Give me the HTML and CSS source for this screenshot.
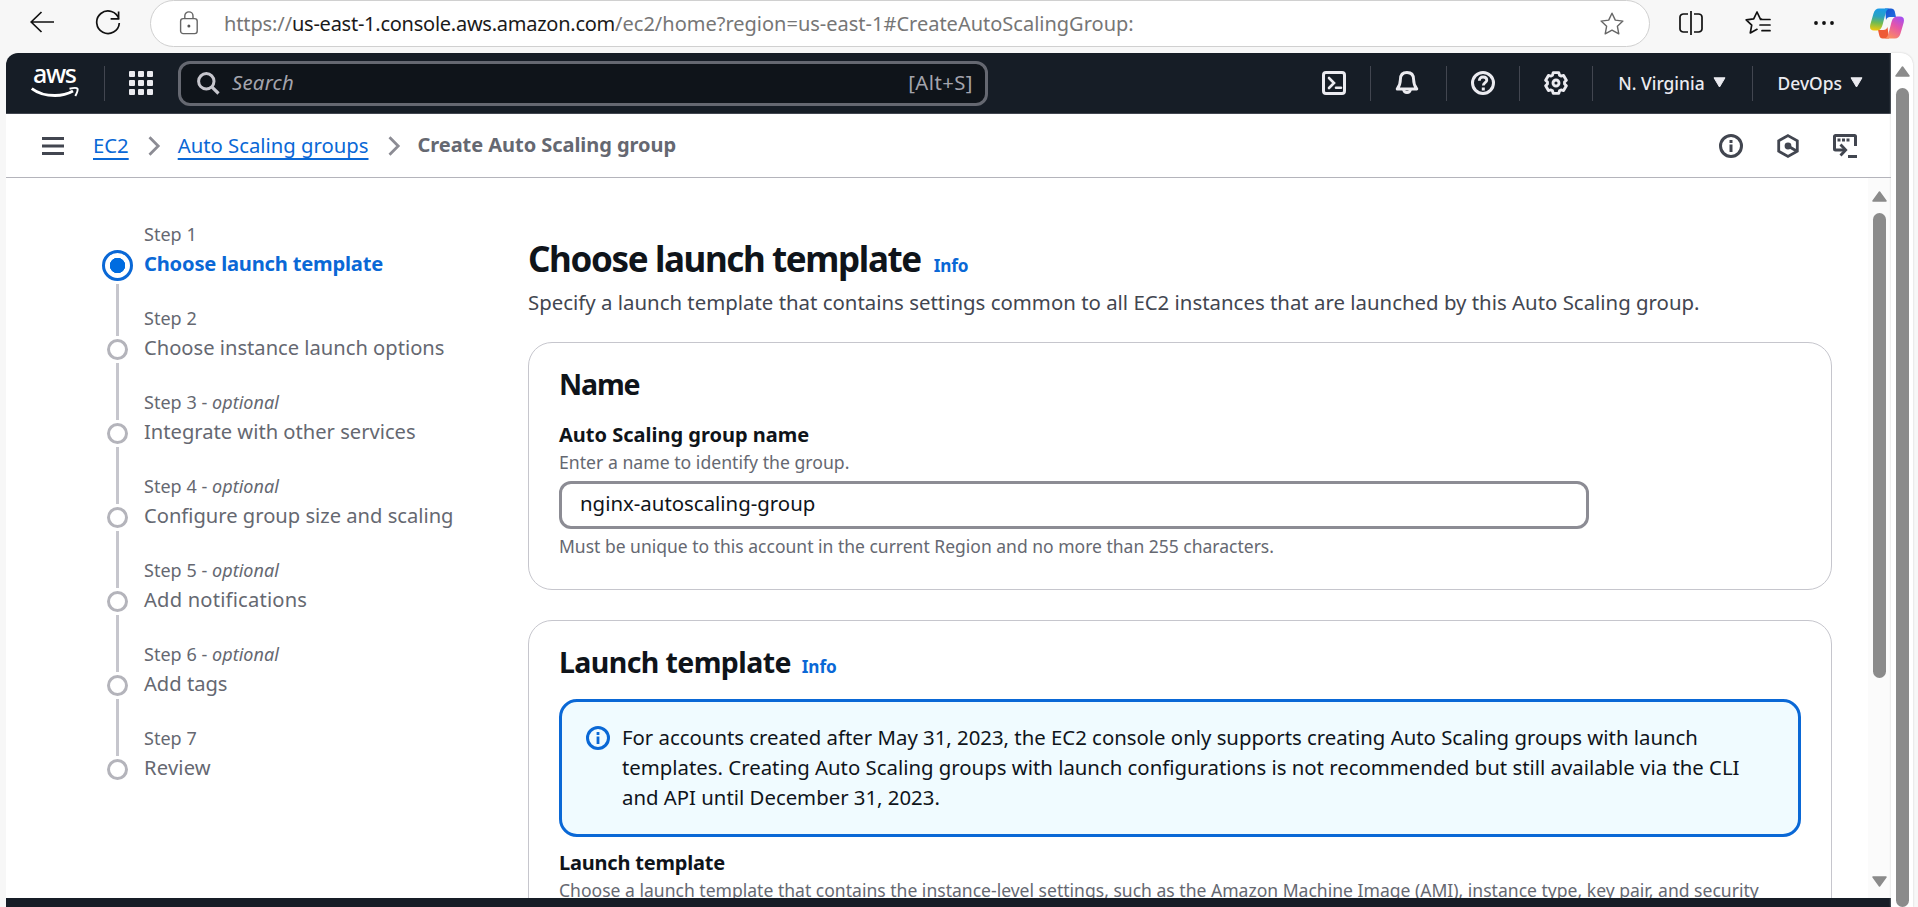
FILE: index.html
```html
<!DOCTYPE html>
<html lang="en">
<head>
<meta charset="utf-8">
<title>Create Auto Scaling group</title>
<link rel="stylesheet" href="styles.css">
</head>
<body>
<div class="browser-bar">
  <svg class="b-back" width="24" height="22" viewBox="0 0 24 22"><path d="M11.5 1 1.2 11l10.3 10M1.2 11H24" fill="none" stroke="#111" stroke-width="1.7"/></svg>
  <svg class="b-reload" width="26" height="26" viewBox="0 0 26 26"><path d="M23.9 9.2A11.3 11.3 0 1 0 24.3 13M23.6 1.5v7.3h-8" fill="none" stroke="#111" stroke-width="1.7"/></svg>
  <div class="address">
    <svg class="b-lock" width="20" height="24" viewBox="0 0 20 24"><rect x="1.6" y="7.6" width="16.6" height="15" rx="2.6" fill="none" stroke="#666" stroke-width="1.4"/><path d="M5.8 7.6V5a4.1 4.1 0 0 1 8.2 0v2.6" fill="none" stroke="#666" stroke-width="1.4"/><circle cx="9.9" cy="15" r="1.5" fill="#555"/></svg>
    <div class="url"><span class="u1">https://</span><span class="u2">us-east-1.console.aws.amazon.com</span><span class="u3">/ec2/home?region=us-east-1#CreateAutoScalingGroup:</span></div>
    <svg class="b-star" width="26" height="26" viewBox="0 0 26 26"><path d="M13 2.2l3.3 6.9 7.6 1-5.5 5.2 1.4 7.5L13 19.2l-6.8 3.6 1.4-7.5L2.1 10.1l7.6-1z" fill="none" stroke="#666" stroke-width="1.4" stroke-linejoin="round"/></svg>
  </div>
  <svg class="b-split" width="24" height="24" viewBox="0 0 24 24"><path d="M9 3H4.500A3.500 3 0 0 0 1 6v12a3.500 3 0 0 0 3.500 3H9M15 3h4.500A3.500 3 0 0 1 23 6v12a3.500 3 0 0 1-3.500 3H15M12 0v24" fill="none" stroke="#111" stroke-width="1.7"/></svg>
  <svg class="b-fav" width="26" height="24" viewBox="0 0 26 24"><path d="M16.500 8l-1.200-.2L12 1 8.700 7.800l-7.500 1 5.500 5.300-1.400 7.800L12 18.300M15.500 8.500H25M15 14h10M17 19.700h8" fill="none" stroke="#111" stroke-width="1.700" stroke-linejoin="round" stroke-linecap="round"/></svg>
  <svg class="b-dots" width="22" height="6" viewBox="0 0 22 6"><g fill="#111"><circle cx="3" cy="3" r="1.900"/><circle cx="11" cy="3" r="1.900"/><circle cx="19" cy="3" r="1.900"/></g></svg>
  <svg class="b-copilot" width="34" height="31" viewBox="0 0 34 31">
    <defs>
      <linearGradient id="ca" x1=".4" y1="0" x2=".3" y2="1"><stop offset="0" stop-color="#1a9be8"/><stop offset=".35" stop-color="#2aa3c0"/><stop offset=".65" stop-color="#72bb50"/><stop offset="1" stop-color="#f2c80c"/></linearGradient>
      <linearGradient id="cb" x1=".8" y1="0" x2=".3" y2="1"><stop offset="0" stop-color="#a64ef0"/><stop offset=".45" stop-color="#e556a8"/><stop offset="1" stop-color="#fb8d60"/></linearGradient>
      <linearGradient id="cc" x1="0" y1="0" x2="1" y2="1"><stop offset="0" stop-color="#1550d0"/><stop offset="1" stop-color="#2273e2"/></linearGradient>
    </defs>
    <path d="M15 .5h6q3 0 3.800 3L26 9h-6q-3 0-4 3z" fill="url(#cc)"/>
    <path d="M19 30.500h-6.500q-2.500 0-3.200-3L8 22h5.500q3 0 4-3z" fill="#ee5a35"/>
    <path d="M9 .5h10q-2.500 1-3.500 5l-3 11.500q-1.500 5.500-5.500 5.500H4q-5 0-3.700-6L3.500 5.500Q5 .5 9 .5z" fill="url(#ca)"/>
    <path d="M25 30.500H15q2.500-1 3.500-5l3-11.500q1.500-5.500 5.500-5.500h3q5 0 3.700 6l-3.200 11q-1.500 5-5.500 5z" fill="url(#cb)"/>
  </svg>
</div>

<div class="viewport">
  <div class="page">
    <header class="topnav">
      <svg class="logo" width="50" height="38" viewBox="0 0 50 38"><text class="logo-text" x="2" y="22" textLength="44">aws</text><path d="M.8 27.500Q10 34.500 24 34.500q10 0 18-4.500" fill="none" stroke="#fff" stroke-width="2.800"/><path d="M38.500 27.800q7-1.800 8 0 .8 1.700-2.200 7.200" fill="none" stroke="#fff" stroke-width="2"/></svg>
      <i class="divider d-logo"></i>
      <svg class="apps" width="24" height="24" viewBox="0 0 24 24"><g fill="#ebebf0"><rect width="6" height="6" rx="1"/><rect x="9" width="6" height="6" rx="1"/><rect x="18" width="6" height="6" rx="1"/><rect y="9" width="6" height="6" rx="1"/><rect x="9" y="9" width="6" height="6" rx="1"/><rect x="18" y="9" width="6" height="6" rx="1"/><rect y="18" width="6" height="6" rx="1"/><rect x="9" y="18" width="6" height="6" rx="1"/><rect x="18" y="18" width="6" height="6" rx="1"/></g></svg>
      <div class="search">
        <svg width="23" height="23" viewBox="0 0 23 23"><circle cx="9.300" cy="9.300" r="7.700" fill="none" stroke="#c6c6cd" stroke-width="3"/><path d="M14.800 14.800l6.700 6.700" stroke="#c6c6cd" stroke-width="3.200"/></svg>
        <em>Search</em><span>[Alt+S]</span>
      </div>
      <div class="tools">
        <svg width="24" height="24" viewBox="0 0 24 24" fill="none" stroke="#ebebf0" stroke-width="3"><rect x="1.500" y="1.500" width="21" height="21" rx="2.500"/><path d="M7 7l5 5-5 5M14 16.800h5" stroke-width="2.600" stroke-linecap="round"/></svg>
        <i class="divider"></i>
        <svg class="bell" width="24" height="24" viewBox="0 0 24 24" fill="none" stroke="#ebebf0" stroke-width="2.900" stroke-linejoin="round"><path d="M12 1.500c-4.500 0-6.600 3-6.600 7 0 4.500-.8 6.500-3.200 9.500h19.600c-2.400-3-3.200-5-3.200-9.500 0-4-2.100-7-6.600-7z"/><path d="M8.500 18.500a3.600 4 0 0 0 7 0"/></svg>
        <i class="divider"></i>
        <svg width="24" height="24" viewBox="0 0 24 24" fill="none" stroke="#ebebf0" stroke-width="3"><circle cx="12" cy="12" r="10.500"/><path d="M8.300 9.700c0-2.300 1.500-3.700 3.700-3.700s3.800 1.300 3.800 3.200c0 2.500-3.500 2.500-3.500 5.300" stroke-width="2.800"/><path d="M12.300 16.500v3" stroke-width="3"/></svg>
        <i class="divider"></i>
        <svg width="24" height="24" viewBox="0 0 24 24" fill="none" stroke="#ebebf0" stroke-width="2.900" stroke-linejoin="round"><path d="M8.500 4.140 9.230 1.660h5.540l.73 2.480 1.550.9 2.520-.61 2.770 4.800-1.790 1.870v1.800l1.790 1.870-2.770 4.800-2.520-.61-1.550.9-.73 2.480H9.230l-.73-2.480-1.550-.9-2.520.61-2.770-4.800 1.790-1.870v-1.800L1.660 9.230l2.770-4.800 2.520.61z"/><circle cx="12" cy="12" r="3"/></svg>
        <i class="divider"></i>
        <div class="menu region">N. Virginia<svg width="13" height="11" viewBox="0 0 13 11"><path d="M1 .8h11L6.500 10z" fill="#ebebf0" stroke="#ebebf0" stroke-linejoin="round"/></svg></div>
        <i class="divider"></i>
        <div class="menu account">DevOps<svg width="13" height="11" viewBox="0 0 13 11"><path d="M1 .8h11L6.500 10z" fill="#ebebf0" stroke="#ebebf0" stroke-linejoin="round"/></svg></div>
      </div>
    </header>

    <nav class="crumbs">
      <svg class="burger" width="22" height="18" viewBox="0 0 22 18"><path d="M0 1.500h22M0 9h22M0 16.500h22" stroke="#424650" stroke-width="2.800"/></svg>
      <a class="c-ec2">EC2</a>
      <svg class="chev" width="13" height="20" viewBox="0 0 13 20"><path d="M1.500 1.200l8.700 8.800-8.700 8.800" fill="none" stroke="#8c8c94" stroke-width="2.800"/></svg>
      <a class="c-asg">Auto Scaling groups</a>
      <svg class="chev" width="13" height="20" viewBox="0 0 13 20"><path d="M1.500 1.200l8.700 8.800-8.700 8.800" fill="none" stroke="#8c8c94" stroke-width="2.800"/></svg>
      <b>Create Auto Scaling group</b>
      <div class="crumb-tools">
        <svg width="24" height="24" viewBox="0 0 24 24" fill="none" stroke="#424650" stroke-width="3"><circle cx="12" cy="12" r="10.500"/><path d="M12 6v3M12 10.500v7.500"/></svg>
        <svg width="24" height="24" viewBox="0 0 24 24" fill="none" stroke="#424650" stroke-width="2.800"><path d="M12 1.600l9.300 5.200v10.400L12 22.400l-9.300-5.200V6.800z"/><path d="M12 12l9 5.200"/><circle cx="12" cy="12" r="3.400" fill="#424650" stroke="none"/></svg>
        <svg width="24" height="24" viewBox="0 0 24 24" fill="none" stroke="#424650" stroke-width="3"><path d="M22.500 12V2.500a1 1 0 0 0-1-1h-19a1 1 0 0 0-1 1V15a1 1 0 0 0 1 1H12M15 22.500h9"/><path d="M7.500 10.500l5.200 5.500-5.200 5.500" stroke-width="2.800"/><path d="M4.500 6h12" stroke-dasharray="3 1.500"/></svg>
      </div>
    </nav>

    <div class="scrollarea">
      <div class="content">
        <ol class="steps">
          <li class="active"><div class="rail"><i class="ring"></i><i class="tail"></i></div><div><small>Step 1</small><p>Choose launch template</p></div></li>
          <li><div class="rail"><i class="lead"></i><i class="ring"></i><i class="tail"></i></div><div><small>Step 2</small><p>Choose instance launch options</p></div></li>
          <li><div class="rail"><i class="lead"></i><i class="ring"></i><i class="tail"></i></div><div><small>Step 3 - <em>optional</em></small><p>Integrate with other services</p></div></li>
          <li><div class="rail"><i class="lead"></i><i class="ring"></i><i class="tail"></i></div><div><small>Step 4 - <em>optional</em></small><p>Configure group size and scaling</p></div></li>
          <li><div class="rail"><i class="lead"></i><i class="ring"></i><i class="tail"></i></div><div><small>Step 5 - <em>optional</em></small><p class="wide">Add notifications</p></div></li>
          <li><div class="rail"><i class="lead"></i><i class="ring"></i><i class="tail"></i></div><div><small>Step 6 - <em>optional</em></small><p>Add tags</p></div></li>
          <li><div class="rail"><i class="lead"></i><i class="ring"></i></div><div><small>Step 7</small><p class="wide">Review</p></div></li>
        </ol>

        <main>
          <div class="title"><h1>Choose launch template</h1><a class="info">Info</a></div>
          <p class="desc">Specify a launch template that contains settings common to all EC2 instances that are launched by this Auto Scaling group.</p>

          <section class="card">
            <h2 class="h-name">Name</h2>
            <label class="label label-name" for="asg">Auto Scaling group name</label>
            <p class="hint">Enter a name to identify the group.</p>
            <input class="field" id="asg" type="text" value="nginx-autoscaling-group">
            <p class="hint constraint">Must be unique to this account in the current Region and no more than 255 characters.</p>
          </section>

          <section class="card card-lt">
            <div class="title"><h2>Launch template</h2><a class="info">Info</a></div>
            <div class="alert">
              <svg width="24" height="24" viewBox="0 0 24 24" fill="none" stroke="#0a68d6" stroke-width="3"><circle cx="12" cy="12" r="10.500"/><path d="M12 6v3M12 10.500v7.500" stroke-width="2.800"/></svg>
              <p>For accounts created after May 31, 2023, the EC2 console only supports creating Auto Scaling groups with launch<br>templates. Creating Auto Scaling groups with launch configurations is not recommended but still available via the CLI<br>and API until December 31, 2023.</p>
            </div>
            <div class="label label-lt">Launch template</div>
            <p class="hint hint-lt">Choose a launch template that contains the instance-level settings, such as the Amazon Machine Image (AMI), instance type, key pair, and security</p>
          </section>
        </main>
      </div>
      <div class="inner-bar">
        <svg width="15" height="11" viewBox="0 0 15 11"><path d="M7.500 1 14 10H1z" fill="#8b8b8b" stroke="#8b8b8b" stroke-width="1.500" stroke-linejoin="round"/></svg>
        <i class="thumb"></i>
        <svg class="down" width="15" height="11" viewBox="0 0 15 11"><path d="M7.500 10 14 1H1z" fill="#8b8b8b" stroke="#8b8b8b" stroke-width="1.500" stroke-linejoin="round"/></svg>
      </div>
    </div>
    <footer></footer>
  </div>
  <div class="outer-bar">
    <svg width="15" height="11" viewBox="0 0 15 11"><path d="M7.500 1 14 10H1z" fill="#8b8b8b" stroke="#8b8b8b" stroke-width="1.500" stroke-linejoin="round"/></svg>
    <i class="thumb"></i>
  </div>
</div>
</body>
</html>
```

FILE: styles.css
```css
* { box-sizing: border-box; }
body {
  margin: 0;
  width: 1918px;
  height: 907px;
  overflow: hidden;
  display: flex;
  flex-direction: column;
  background: #f7f7f7;
  font: 20.3px/30px "Noto Sans", "Open Sans", sans-serif;
  color: #0f141a;
}
svg { display: block; flex: none; }
p, h1, h2, ol { margin: 0; padding: 0; }
ol { list-style: none; }

/* Browser toolbar */
.browser-bar { height: 53px; flex: none; display: flex; align-items: flex-start; }
.b-back { margin: 11px 0 0 30px; }
.b-reload { margin: 10px 0 0 41px; }
.address {
  width: 1500px; height: 47px; margin-left: 29px;
  display: flex; align-items: center;
  background: #fff; border: 1px solid #d0d0d0; border-radius: 24px;
}
.b-lock { margin: -1px 0 0 28px; }
.url { flex: 1; margin-left: 25px; font-size: 20px; white-space: nowrap; color: #767676; }
.u1 { letter-spacing: -0.12px; }
.u2 { color: #1a1a1a; letter-spacing: -0.25px; }
.b-star { margin-right: 24px; }
.b-split { margin: 11px 0 0 29px; }
.b-fav { margin: 11px 0 0 42px; }
.b-dots { margin: 20px 0 0 42px; }
.b-copilot { margin: 8px 0 0 35px; }

/* Window frame */
.viewport { flex: 1; min-height: 0; display: flex; margin: 0 5px 0 6px; }
.page {
  width: 1885px; display: flex; flex-direction: column;
  background: #fff; border-radius: 12px 0 0 0; overflow: hidden;
}
.outer-bar {
  width: 22px; display: flex; flex-direction: column; align-items: center;
  padding: 13px 0 0 1px; background: #fff; border-radius: 0 12px 0 0;
  box-shadow: 0 0 2px #c8c8c8;
}
.thumb { width: 13px; border-radius: 7px; background: #8b8b8b; }
.outer-bar .thumb { flex: 1; margin-top: 11px; }

/* Top navigation */
.topnav {
  height: 61px; flex: none; display: flex; align-items: center;
  background: #161d26; border-bottom: 1px solid #424650; color: #ebebf0;
}
.divider { width: 1px; height: 35px; background: #424650; flex: none; }
.logo { margin: -6px 0 0 25px; }
.logo-text { font: 500 25px "Noto Sans", sans-serif; fill: #fff; }
.d-logo { margin-left: 23px; }
.apps { margin-left: 24px; }
.search {
  width: 810px; height: 45px; margin-left: 25px; padding: 0 12px 0 16px;
  display: flex; align-items: center;
  background: #0f141a; border: 3px solid #656871; border-radius: 12px; color: #a4a4ad;
}
.search em { flex: 1; margin: -3px 0 0 12px; letter-spacing: .25px; }
.search span { margin-top: -3px; letter-spacing: .45px; }
.tools { flex: 1; display: flex; align-items: center; justify-content: flex-end; gap: 24px; }
.bell { margin-right: 3px; }
.menu { display: flex; align-items: center; gap: 8px; font-size: 17.4px; font-weight: 500; line-height: 28px; white-space: nowrap; }
.menu svg { margin-top: -1px; }
.region { margin: 0 2px 0 1px; }
.account { margin: 0 28px 0 1px; }

/* Breadcrumbs */
.crumbs {
  height: 64px; flex: none; display: flex; align-items: center;
  padding-left: 36px; border-bottom: 1px solid #b4b4bb;
  white-space: nowrap;
}
.crumbs a { margin-top: -1px; color: #0a68d6; text-decoration: underline; text-decoration-thickness: 2px; text-underline-offset: 5px; text-decoration-skip-ink: none; }
.crumbs b { margin: -1px 0 0 17px; color: #656871; font-size: 20px; letter-spacing: -.05px; }
.crumbs .c-ec2 { margin-left: 29px; }
.chev { margin-left: 19px; }
.crumbs .c-asg { margin-left: 17px; }
.crumb-tools { display: flex; gap: 33px; margin: 0 34px 0 auto; }

/* Scrollable body */
.scrollarea { flex: 1; min-height: 0; display: flex; }
.content { flex: 1; min-width: 0; display: flex; overflow: hidden; }
.inner-bar { width: 23px; flex: none; display: flex; flex-direction: column; align-items: center; padding: 13px 0 11px; background: #fbfbfb; }
.inner-bar .thumb { height: 465px; margin-top: 11px; }
.inner-bar .down { margin-top: auto; }
footer { height: 9px; flex: none; background: #161d26; }

/* Wizard steps */
.steps { width: 426px; flex: none; margin: 43px 0 0 96px; color: #656871; }
.steps li { height: 84px; display: flex; gap: 11px; }
.steps small { display: block; font-size: 18px; line-height: 26px; letter-spacing: .03px; }
.steps p { line-height: 33px; font-size: 20.15px; }
.steps .wide { letter-spacing: .2px; }
.rail { width: 31px; display: flex; flex-direction: column; align-items: center; }
.ring { width: 21px; height: 21px; flex: none; margin: 3px 0; border: 3px solid #b4b4bb; border-radius: 50%; }
.lead, .tail { width: 3px; background: #c6c6cd; }
.lead { height: 31px; flex: none; }
.tail { flex: 1; }
.active .ring { width: 31px; height: 31px; margin: 29px 0 3px; border-color: #0a68d6; background: radial-gradient(circle, #006ce0 7.500px, #fff 8px); }
.active p { color: #0a68d6; font-weight: 700; letter-spacing: -.2px; }

/* Main column */
main { width: 1304px; padding-top: 59px; white-space: nowrap; }
.title { display: flex; align-items: baseline; gap: 11px; }
h1 { font-size: 35px; line-height: 44px; font-weight: 700; letter-spacing: -1.38px; }
h2 { font-size: 28.500px; line-height: 36px; font-weight: 700; letter-spacing: -.6px; }
.h-name { letter-spacing: -1.15px; }
.info { color: #0a68d6; font-size: 17.200px; font-weight: 700; line-height: 24px; letter-spacing: -.15px; }
.title h1 + .info { margin-left: 2px; }
.desc { margin-top: 6px; color: #424650; font-size: 20.400px; }
.card { height: 248px; margin-top: 25px; padding: 23px 30px 0; border: 1px solid #c6c6cd; border-radius: 24px; }
.card-lt { height: 320px; margin-top: 30px; }
.label { display: block; font-size: 20px; font-weight: 700; }
.label-name { margin-top: 18px; }
.hint { color: #656871; font-size: 17.650px; line-height: 24px; }
.field {
  display: block; width: 1030px; height: 48px; margin: 7px 0 5px; padding: 0 18px 4px;
  border: 3px solid #8c8c94; border-radius: 12px; background: #fff;
  font: inherit; font-size: 20.400px; color: #0f141a;
}
.constraint { font-size: 17.500px; }
.alert {
  display: flex; gap: 12px; height: 138px; margin-top: 19px; padding: 20px 24px 0;
  border: 3px solid #0a68d6; border-radius: 18px; background: #f0fbff;
}
.alert svg { margin-top: 4px; }
.alert p { font-size: 20.350px; }
.label-lt { margin-top: 11px; letter-spacing: -.2px; }
.hint-lt { font-size: 17.560px; }
```
